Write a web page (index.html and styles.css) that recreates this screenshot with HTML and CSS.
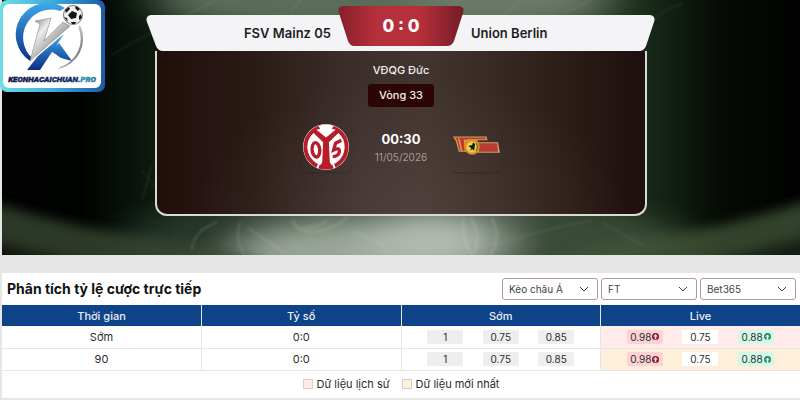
FILE: index.html
```html
<!DOCTYPE html>
<html lang="vi">
<head>
  <meta charset="UTF-8">
  <meta name="viewport" content="width=device-width, initial-scale=1">
  <title>FSV Mainz 05 - Union Berlin</title>
  <link rel="stylesheet" href="styles.css">
</head>
<body>
  <header class="hero">
    <!-- smoke -->
    <svg class="hero-bg" viewBox="0 0 798 255" preserveAspectRatio="none" aria-hidden="true">
      <defs>
        <linearGradient id="base" x1="0" x2="1" y1="0" y2="0">
          <stop offset="0" stop-color="#010201"/>
          <stop offset=".1" stop-color="#010301"/>
          <stop offset=".2" stop-color="#0e1c10"/>
          <stop offset=".4" stop-color="#4c5c4c"/>
          <stop offset=".6" stop-color="#4c5c4c"/>
          <stop offset=".81" stop-color="#172818"/>
          <stop offset=".9" stop-color="#060b05"/>
          <stop offset="1" stop-color="#010201"/>
        </linearGradient>
        <filter id="soft" x="-50%" y="-50%" width="200%" height="200%"><feGaussianBlur stdDeviation="24 12"/></filter>
        <filter id="soft2" x="-20%" y="-50%" width="140%" height="200%"><feGaussianBlur stdDeviation="6"/></filter>
        <filter id="wisp" x="-20%" y="-20%" width="140%" height="140%"><feGaussianBlur stdDeviation="1"/></filter>
      </defs>
      <rect width="798" height="255" fill="url(#base)"/>
      <g filter="url(#soft)">
        <ellipse cx="270" cy="0" rx="120" ry="26" fill="#5b6e5b"/>
        <ellipse cx="500" cy="0" rx="110" ry="26" fill="#6b7c68"/>
        <ellipse cx="360" cy="252" rx="140" ry="30" fill="#98a497"/>
        <ellipse cx="430" cy="240" rx="70" ry="28" fill="#b0baae"/>
        <ellipse cx="600" cy="240" rx="80" ry="24" fill="#3a4e37"/>
        <ellipse cx="190" cy="236" rx="60" ry="24" fill="#26382a"/>
      </g>
      <g filter="url(#soft2)" opacity=".75">
        <path d="M-10 202 Q70 228 140 236 T260 262 L260 275 L-10 275Z" fill="#3b4b34"/>
        <path d="M808 200 Q730 226 660 236 T540 258 L540 275 L808 275Z" fill="#435639"/>
        <path d="M-10 240 L80 262 L-10 270Z" fill="#141d11"/>
        <path d="M808 235 L700 262 L808 270Z" fill="#1e2c1b"/>
      </g>
      <g fill="none" stroke="#cdd6ca" stroke-opacity=".16" filter="url(#wisp)">
        <path d="M110 55 Q130 42 155 30 M185 15 L215 0 M288 12 L300 0 M500 16 L520 0 M560 14 L590 0 M650 20 Q665 8 680 4"/>
        <path d="M290 220 Q298 236 320 230 T345 216 M300 228 Q315 228 325 221" stroke-width="3"/>
        <path d="M190 250 Q190 232 215 222 M238 222 Q232 240 242 254 M246 228 L284 254 M350 232 Q380 240 388 254" stroke-width="2"/>
        <path d="M468 218 Q480 230 472 255 M490 218 Q500 238 488 255 M462 218 Q458 235 470 255" stroke-width="3"/>
        <path d="M490 245 Q540 230 590 220 M600 222 L640 245 M140 170 L155 190 M140 200 L150 165"/>
      </g>
    </svg>

    <a class="logo" href="#" aria-label="Trang chủ">
      <svg viewBox="0 0 105 92" aria-hidden="true">
        <defs>
          <linearGradient id="frame" x1="0" x2="1" y1="0" y2="0">
            <stop offset="0" stop-color="#6ddfe0"/><stop offset=".5" stop-color="#3cacdc"/><stop offset="1" stop-color="#1b5aa8"/>
          </linearGradient>
          <linearGradient id="silver" x1="0" x2="1" y1="0" y2="1">
            <stop offset="0" stop-color="#777"/><stop offset=".3" stop-color="#ececec"/><stop offset=".65" stop-color="#999"/><stop offset="1" stop-color="#333"/>
          </linearGradient>
          <linearGradient id="blue" x1="0" x2="0" y1="0" y2="1">
            <stop offset="0" stop-color="#3fa9ea"/><stop offset="1" stop-color="#0a2f86"/>
          </linearGradient>
          <linearGradient id="word" x1="0" x2="1" y1="0" y2="0">
            <stop offset="0" stop-color="#0b1c46"/><stop offset=".78" stop-color="#0d2c63"/><stop offset=".84" stop-color="#2f9db8"/><stop offset="1" stop-color="#1b6c96"/>
          </linearGradient>
        </defs>
        <rect width="105" height="92" rx="7" fill="url(#frame)"/>
        <rect x="3" y="4" width="98" height="84" rx="6" fill="#fff"/>
        <path d="M65 8 A31 31 0 0 0 30 61 L32 58 A28 28 0 0 1 60 11Z" fill="url(#blue)"/>
        <path d="M80 25 A31 31 0 0 1 58 69 L60 67 A29 29 0 0 0 78 27Z" fill="url(#silver)"/>
        <path d="M35 21 L51 18 L44 41 L63 22 L70 26 L30 61 L40 24Z" fill="url(#silver)" stroke="#777" stroke-width=".5"/>
        <path d="M64 34 L40 70 L27 70 L38 56Z M51 51 L59 43 L72 61 L61 58Z" fill="url(#blue)"/>
        <circle cx="73" cy="15" r="9.5" fill="#f2f2f2" stroke="#555" stroke-width=".8"/>
        <path d="M72 11 L77 13 L76 18 L71 19 L68 15Z M65 10 L69 7 L70 9 L66 13Z M76 6 L80 9 L78 11 L75 8Z M81 14 L82 18 L79 20 L79 16Z M71 22 L76 22 L75 24 L72 24Z M64 17 L67 18 L68 22Z" fill="#151515"/>
        <text class="logo-text" x="52" y="82" text-anchor="middle" fill="url(#word)" stroke="url(#word)">KEONHACAICHUAN.PRO</text>
      </svg>
    </a>

    <section class="board">
      <div class="board-top">
        <svg class="board-shape" viewBox="0 0 510 36" preserveAspectRatio="none" aria-hidden="true">
          <path d="M5 0 H504 Q510 1 508 7 L500 31 Q498 36 493 36 H17 Q12 36 10 31 L1 7 Q-1 1 5 0Z" fill="#f4f4f6"/>
        </svg>
        <h2 class="team team-home">FSV Mainz 05</h2>
        <div class="score">
          <svg class="score-shape" viewBox="0 0 126 40" preserveAspectRatio="none" aria-hidden="true">
            <defs>
              <linearGradient id="red" x1="0" x2="1" y1="0" y2="0">
                <stop offset="0" stop-color="#861f2a"/><stop offset=".3" stop-color="#b5303b"/><stop offset=".65" stop-color="#b5303b"/><stop offset="1" stop-color="#741c25"/>
              </linearGradient>
            </defs>
            <path d="M5 0 H121 Q127 1 125 7 L116 35 Q114 40 109 40 H16 Q12 40 10 35 L1 7 Q-1 1 5 0Z" fill="url(#red)"/>
          </svg>
          <span class="score-value">0 : 0</span>
        </div>
        <h2 class="team team-away">Union Berlin</h2>
      </div>

      <div class="board-body">
        <p class="league">VĐQG Đức</p>
        <p class="round">Vòng 33</p>
        <div class="match">
          <div class="crest">
            <svg viewBox="0 0 48 48" role="img" aria-label="FSV Mainz 05">
              <circle cx="24" cy="24" r="24" fill="#f3e4e2"/>
              <circle cx="24" cy="24" r="22.5" fill="#b71c2c"/>
              <path d="M21 45 L22 19 L11 9 Q3 15 4 25 Q6 40 18 44Z M27 45 L26 19 L37 9 Q45 15 44 25 Q42 40 30 44Z" fill="#fff"/>
              <path d="M11 9 L17 6 L20 10 L24 13 L28 10 L31 6 L37 9 L27 19 L28 40 L31 45 H17 L20 40 L21 19Z" fill="#b71c2c"/>
              <ellipse cx="13.500" cy="27" rx="4" ry="7.500" fill="none" stroke="#b71c2c" stroke-width="3.500" transform="rotate(-6 13 27)"/>
              <path d="M40 17 L34 20 L32 27 Q38 24 38 29 Q37 34 31 34" fill="none" stroke="#b71c2c" stroke-width="3.500"/>
              <circle cx="24" cy="24" r="21.500" fill="none" stroke="#b71c2c" stroke-width="4"/>
              <path d="M16 2 Q24 -1 32 2 L30 5 L34 6 L24 14 L14 6 L18 5Z" fill="#fff"/>
              <path d="M20 44 L22 36 H26 L28 44 L24 47Z" fill="#b71c2c"/>
              <path d="M18 38 L15 46 M30 38 L33 46" stroke="#fff" stroke-width="2"/>
            </svg>
          </div>
          <div class="kickoff">
            <strong class="time">00:30</strong>
            <span class="date">11/05/2026</span>
          </div>
          <div class="crest">
            <svg viewBox="0 0 48 48" role="img" aria-label="Union Berlin">
              <path d="M0 13 H35 L36 17 H26 L24 19 H47 L49 30 H24 Q20 33 16 29 H6 L3 18Z" fill="#c9a35d"/>
              <path d="M2 14 H34 V16 H14 L14 28 H7 L4 17Z M27 20 H46 L47 29 H27Z" fill="#bb3c32"/>
              <path d="M6 15 L9 28 M12 16 L13 28 M13 18 H22" stroke="#e99b3d" stroke-width="1.500" fill="none"/>
              <circle cx="20" cy="24" r="8" fill="#e28a2b"/>
              <circle cx="20" cy="24" r="6" fill="#e9d243"/>
              <path d="M18 28 L19 25 L16 23 L20 22 L21 19 L23 21 L22 28 L20 26Z" fill="#1c1710"/>
              <path d="M24 20 Q27 24 24 28" stroke="#4d8a35" stroke-width="1.500" fill="none"/>
            </svg>
          </div>
        </div>
      </div>
    </section>
  </header>

  <main class="odds">
    <div class="odds-head">
      <h1 class="odds-title">Phân tích tỷ lệ cược trực tiếp</h1>
      <form class="filters">
        <div class="filter">
          <select aria-label="Loại kèo"><option>Kèo châu Á</option></select>
          <svg class="chevron" viewBox="0 0 10 6" aria-hidden="true"><path d="M1 1 L5 5 L9 1"/></svg>
        </div>
        <div class="filter">
          <select aria-label="Thời gian"><option>FT</option></select>
          <svg class="chevron" viewBox="0 0 10 6" aria-hidden="true"><path d="M1 1 L5 5 L9 1"/></svg>
        </div>
        <div class="filter">
          <select aria-label="Nhà cái"><option>Bet365</option></select>
          <svg class="chevron" viewBox="0 0 10 6" aria-hidden="true"><path d="M1 1 L5 5 L9 1"/></svg>
        </div>
      </form>
    </div>

    <table class="odds-table">
      <thead>
        <tr><th>Thời gian</th><th>Tỷ số</th><th>Sớm</th><th>Live</th></tr>
      </thead>
      <tbody>
        <tr>
          <td>Sớm</td>
          <td>0:0</td>
          <td><div class="chips"><span class="chip">1</span><span class="chip">0.75</span><span class="chip">0.85</span></div></td>
          <td class="live history">
            <div class="chips">
              <span class="chip down">0.98<svg class="arrow" viewBox="0 0 8 8" aria-hidden="true"><circle cx="4" cy="4" r="4" fill="#7d1526"/><path d="M3 7 H5 V4 H7 L4 1 L1 4 H3Z" fill="#fcd5d7"/></svg></span>
              <span class="chip flat">0.75</span>
              <span class="chip up">0.88<svg class="arrow" viewBox="0 0 8 8" aria-hidden="true"><circle cx="4" cy="4" r="4" fill="#2f8368"/><path d="M3 8 H5 V4 H7 L4 2 L1 4 H3Z" fill="#d2f8e8"/></svg></span>
            </div>
          </td>
        </tr>
        <tr>
          <td>90</td>
          <td>0:0</td>
          <td><div class="chips"><span class="chip">1</span><span class="chip">0.75</span><span class="chip">0.85</span></div></td>
          <td class="live latest">
            <div class="chips">
              <span class="chip down">0.98<svg class="arrow" viewBox="0 0 8 8" aria-hidden="true"><circle cx="4" cy="4" r="4" fill="#7d1526"/><path d="M3 7 H5 V4 H7 L4 1 L1 4 H3Z" fill="#fcd5d7"/></svg></span>
              <span class="chip flat">0.75</span>
              <span class="chip up">0.88<svg class="arrow" viewBox="0 0 8 8" aria-hidden="true"><circle cx="4" cy="4" r="4" fill="#2f8368"/><path d="M3 8 H5 V4 H7 L4 2 L1 4 H3Z" fill="#d2f8e8"/></svg></span>
            </div>
          </td>
        </tr>
      </tbody>
    </table>

    <div class="legend">
      <span class="legend-item"><i class="swatch history"></i>Dữ liệu lịch sử</span>
      <span class="legend-item"><i class="swatch latest"></i>Dữ liệu mới nhất</span>
    </div>
  </main>
</body>
</html>
```
FILE: styles.css
```css
* {
  box-sizing: border-box;
}
body {
  margin: 0;
  padding-left: 2px;
  background-color: #e6e6e6;
  color: #2c2c2c;
  font-family: Inter, "Liberation Sans", sans-serif;
  font-size: 11px;
}
h1, h2, p {
  margin: 0;
}

/* hero */
.hero {
  position: relative;
  padding: 15px 0 39px;
  background-color: #020302;
}
.hero-bg {
  position: absolute;
  top: 0;
  left: 0;
  width: 100%;
  height: 100%;
}
.logo {
  position: absolute;
  top: 0;
  left: -2px;
  width: 105px;
  height: 92px;
  z-index: 2;
}
.logo svg {
  display: block;
}
.logo-text {
  font: italic 900 8px Roboto, sans-serif;
  stroke-width: 0.4px;
}

/* scoreboard */
.board {
  position: relative;
  max-width: 510px;
  margin: 0 auto;
}
.board-top {
  position: relative;
  z-index: 1;
  display: grid;
  grid-template-columns: 1fr 126px 1fr;
  grid-template-rows: 36px;
  column-gap: 7px;
  align-items: center;
}
.board-shape,
.score-shape {
  position: absolute;
  top: 0;
  left: 0;
  width: 100%;
  height: 100%;
}
.team {
  position: relative;
  color: #1d1d1f;
  font-size: 13px;
  font-weight: 600;
  line-height: 20px;
}
.team-home {
  text-align: right;
}
.score {
  position: relative;
  align-self: end;
  height: 40px;
  margin-bottom: 5px;
  text-align: center;
}
.score-value {
  position: relative;
  color: #fff;
  font-size: 17px;
  font-weight: 800;
  line-height: 40px;
}
.board-body {
  margin: 0 9px;
  padding: 11px 0 42px;
  border: 2px solid #d9d9d5;
  border-top: 0;
  border-radius: 0 0 12px 12px;
  background:
    radial-gradient(ellipse at 52% 100%, rgba(98, 82, 80, 0.4), transparent 60%),
    linear-gradient(90deg, #200e0b 0%, #2b1b17 20%, #3d302c 42%, #42352f 55%, #2f201a 80%, #1e0f0e 100%);
  color: #f1eeee;
  text-align: center;
}
.league {
  font-weight: 500;
  line-height: 16px;
}
.round {
  width: fit-content;
  margin: 6px auto 0;
  padding: 0 11px;
  border-radius: 3px;
  background-color: #2c0504;
  font-weight: 500;
  line-height: 23px;
}
.match {
  display: flex;
  justify-content: center;
  gap: 24px;
  margin-top: 17px;
}
.crest {
  width: 50px;
  height: 48px;
  border-radius: 5px;
  box-shadow: 0 1px 2px rgba(0, 0, 0, 0.2);
}
.crest svg {
  display: block;
  width: 100%;
  height: 46px;
  overflow: visible;
}
.kickoff {
  width: 52px;
  display: flex;
  flex-direction: column;
  align-items: center;
  padding-top: 6px;
}
.time {
  color: #fff;
  font-size: 13px;
  line-height: 18px;
}
.date {
  color: #a39b98;
  font-size: 10px;
  line-height: 18px;
}

/* odds panel */
.odds {
  margin: 18px 0 2px;
  background-color: #fff;
}
.odds-head {
  display: flex;
  justify-content: space-between;
  align-items: center;
  padding: 5px 4px 5px 5px;
}
.odds-title {
  color: #111;
  font-size: 14px;
  font-weight: 700;
  line-height: 22px;
}
.filters {
  display: flex;
  gap: 3px;
}
.filter {
  position: relative;
}
.filter select {
  display: block;
  width: 96px;
  height: 22px;
  padding: 0 20px 0 6px;
  border: 1px solid #b0989b;
  border-radius: 3px;
  background-color: #fff;
  color: #444;
  font: 10px Inter, "Liberation Sans", sans-serif;
  appearance: none;
}
.chevron {
  position: absolute;
  top: 8px;
  right: 9px;
  width: 10px;
  height: 6px;
  fill: none;
  stroke: #444;
  pointer-events: none;
}
.odds-table {
  width: 100%;
  border-collapse: collapse;
  table-layout: fixed;
  text-align: center;
}
.odds-table th {
  height: 21px;
  padding: 0;
  background-color: #0f4388;
  color: #e8f0fa;
  font-weight: 500;
  line-height: 20px;
}
.odds-table td {
  height: 22px;
  padding: 0;
  border-bottom: 1px solid #e6e6e6;
  line-height: 20px;
}
.odds-table th + th,
.odds-table td + td {
  border-left: 1px solid #e6e6e6;
}
.chips {
  display: grid;
  grid-template-columns: repeat(3, 1fr);
  justify-items: center;
  padding: 0 16px;
}
.chip {
  display: flex;
  justify-content: center;
  align-items: center;
  gap: 1px;
  width: 36px;
  height: 14px;
  border-radius: 2px;
  background-color: #eee;
  font-size: 10px;
  line-height: 14px;
}
.arrow {
  width: 7px;
  height: 7px;
}
.history {
  background-color: #feebea;
}
.latest {
  background-color: #feefda;
}
.flat {
  background-color: #fff;
}
.down {
  background-color: #fcd2d4;
}
.up {
  background-color: #d2f8e8;
}
.legend {
  display: flex;
  justify-content: center;
  gap: 12px;
  padding: 3px 0 4px;
}
.legend-item {
  display: flex;
  align-items: center;
  gap: 4px;
  line-height: 20px;
}
.swatch {
  width: 10px;
  height: 10px;
  border: 1px solid #dccbc6;
}
```
